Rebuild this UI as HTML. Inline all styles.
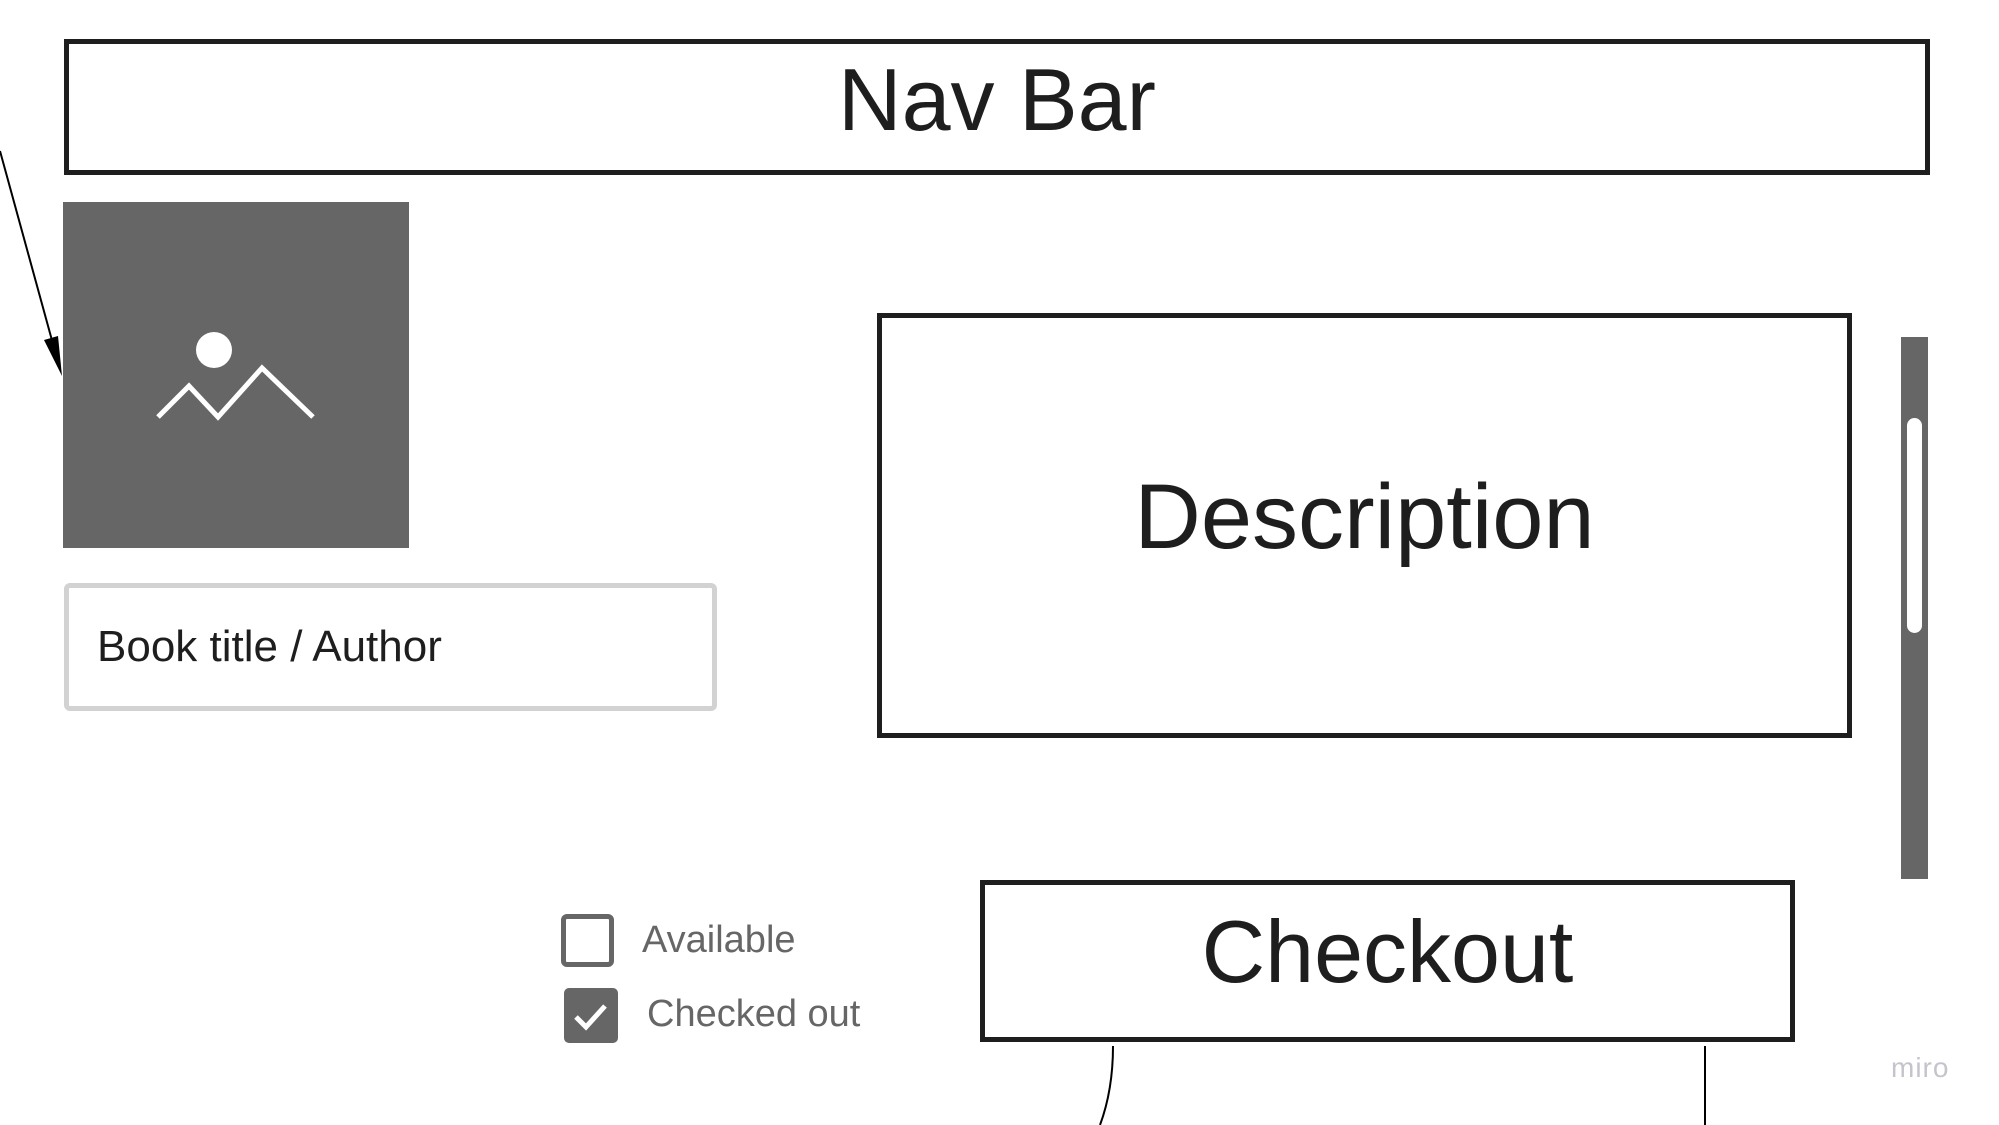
<!DOCTYPE html>
<html><head><meta charset="utf-8"><style>
body{margin:0;width:1999px;height:1125px;background:#fff;position:relative;overflow:hidden;font-family:"Liberation Sans",sans-serif}
.a{position:absolute;box-sizing:border-box}
.box{border:5px solid #1e1e1e;background:#fff}
.big{position:absolute;left:0;right:0;text-align:center;font-size:88px;color:#1e1e1e;line-height:1}
</style></head><body>
<div class="a box" style="left:64px;top:39px;width:1866px;height:136px"><div class="big" style="top:12px">Nav Bar</div></div>
<div class="a" style="left:63px;top:202px;width:346px;height:346px;background:#666"></div>
<svg class="a" style="left:0;top:0" width="1999" height="1125">
<circle cx="214" cy="350" r="18" fill="#fff"/>
<polyline points="158,417 189,386 218,417 262,368 313,417" fill="none" stroke="#fff" stroke-width="5"/>
<line x1="0" y1="151" x2="56" y2="355" stroke="#000" stroke-width="2"/>
<polygon points="62,376 44,340 58,336" fill="#000"/>
<path d="M1113 1046 Q1113 1090 1100 1125" fill="none" stroke="#000" stroke-width="2"/>
<line x1="1705" y1="1046" x2="1705" y2="1125" stroke="#000" stroke-width="2"/>
</svg>
<div class="a" style="left:64px;top:583px;width:653px;height:128px;border:5px solid #d2d2d2;border-radius:6px;background:#fff"></div>
<div class="a" style="left:97px;top:622px;font-size:44px;color:#1e1e1e">Book title / Author</div>
<div class="a box" style="left:877px;top:313px;width:975px;height:425px"><div class="big" style="top:153px;font-size:92px">Description</div></div>
<div class="a" style="left:1901px;top:337px;width:27px;height:542px;background:#666"></div>
<div class="a" style="left:1907px;top:418px;width:15px;height:215px;background:#fff;border-radius:8px"></div>
<div class="a box" style="left:980px;top:880px;width:815px;height:162px"><div class="big" style="top:23px">Checkout</div></div>
<div class="a" style="left:561px;top:914px;width:53px;height:53px;border:5px solid #666;border-radius:6px"></div>
<div class="a" style="left:642px;top:919px;font-size:38px;color:#666">Available</div>
<div class="a" style="left:564px;top:988px;width:54px;height:55px;background:#666;border-radius:5px"></div>
<svg class="a" style="left:564px;top:988px" width="54" height="55"><polyline points="12,29 22,39 41,18" fill="none" stroke="#fff" stroke-width="5"/></svg>
<div class="a" style="left:647px;top:993px;font-size:38px;color:#666">Checked out</div>
<div class="a" style="left:1891px;top:1052px;font-size:28px;color:#c4c4cc;letter-spacing:1px">miro</div>
</body></html>
